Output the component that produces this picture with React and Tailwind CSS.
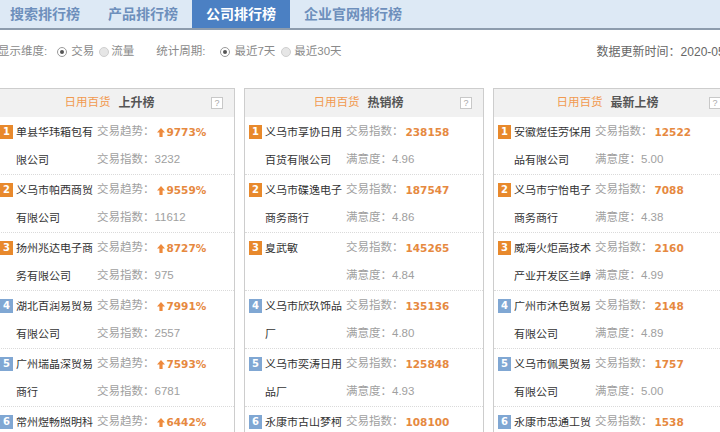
import React from 'react';

const tabs = ['搜索排行榜', '产品排行榜', '公司排行榜', '企业官网排行榜'];

const panels = [
    {
        title: '上升榜',
        label1: '交易趋势：',
        label2: '交易指数：',
        trend: true,
        rows: [
            ['单县华玮箱包有', '限公司', '9773%', '3232'],
            ['义乌市帕西商贸', '有限公司', '9559%', '11612'],
            ['扬州兆达电子商', '务有限公司', '8727%', '975'],
            ['湖北百润易贸易', '有限公司', '7991%', '2557'],
            ['广州瑞晶深贸易', '商行', '7593%', '6781'],
            ['常州煜畅照明科', '技有限公司', '6442%', '1890'],
        ],
    },
    {
        title: '热销榜',
        label1: '交易指数：',
        label2: '满意度：',
        rows: [
            ['义乌市享协日用', '百货有限公司', '238158', '4.96'],
            ['义乌市碟逸电子', '商务商行', '187547', '4.86'],
            ['夏武敏', '', '145265', '4.84'],
            ['义乌市欣玖饰品', '厂', '135136', '4.80'],
            ['义乌市奕涛日用', '品厂', '125848', '4.93'],
            ['永康市古山梦柯', '工贸有限公司', '108100', '4.90'],
        ],
    },
    {
        title: '最新上榜',
        label1: '交易指数：',
        label2: '满意度：',
        rows: [
            ['安徽煜佳劳保用', '品有限公司', '12522', '5.00'],
            ['义乌市宁怡电子', '商务商行', '7088', '4.38'],
            ['威海火炬高技术', '产业开发区兰峥', '2160', '4.99'],
            ['广州市沐色贸易', '有限公司', '2148', '4.89'],
            ['义乌市佩奥贸易', '有限公司', '1757', '5.00'],
            ['永康市忠通工贸', '有限公司', '1538', '4.95'],
        ],
    },
];

const UpArrow = () => (
    <svg width="8" height="9" viewBox="0 0 8 9" className="mr-[2px] shrink-0">
        <polygon points="4,0 8,4.5 5.6,4.5 5.6,9 2.4,9 2.4,4.5 0,4.5" fill="#ee8a3c" />
    </svg>
);

const Radio = ({ checked }) =>
    checked ? (
        <span className="block w-[10px] h-[10px] rounded-full border border-[#9a9a9a] bg-white">
            <span className="block w-[4px] h-[4px] mt-[2px] ml-[2px] rounded-full bg-[#555]" />
        </span>
    ) : (
        <span className="block w-[10px] h-[10px] rounded-full border border-[#cfcfcf] bg-[#e6e6e6]" />
    );

const Row = ({ idx, row, panel }) => {
    const [name1, name2, v1, v2] = row;
    const badge = idx < 3 ? 'bg-[#e8892c]' : 'bg-[#80a7d3]';
    return (
        <div className="pt-[1px] border-b border-dotted border-[#dadada]">
            <div className="h-[28px] flex items-center pl-[4px]">
                <span className={`w-[13px] h-[14px] ${badge} text-white text-[10px] font-bold flex items-center justify-center shrink-0 font-['DejaVu_Sans',sans-serif]`}>
                    {idx + 1}
                </span>
                <span className="w-[84px] pl-[3px] shrink-0 text-[11px] text-[#333] whitespace-nowrap overflow-hidden">{name1}</span>
                <span className="text-[#a0a0a0] whitespace-nowrap">{panel.label1}</span>
                <span className="flex items-center ml-[2px] text-[10.5px] font-bold text-[#e6893f] font-['DejaVu_Sans',sans-serif]">
                    {panel.trend && <UpArrow />}
                    {v1}
                </span>
            </div>
            <div className="h-[28px] flex items-center pl-[4px]">
                <span className="w-[13px] shrink-0" />
                <span className="w-[84px] pl-[3px] shrink-0 text-[11px] text-[#333] whitespace-nowrap overflow-hidden">{name2}</span>
                <span className="text-[#a0a0a0] whitespace-nowrap">
                    {panel.label2}
                    <span className="font-['Liberation_Sans',sans-serif]">{v2}</span>
                </span>
            </div>
        </div>
    );
};

const Panel = ({ panel }) => (
    <div className="w-[240px] shrink-0 border-t border-x border-[#cdcdcd] bg-white">
        <div className="h-[28px] bg-[#f1f1f1] flex items-center">
            <div className="flex-1" />
            <div className="flex items-center gap-[8px] whitespace-nowrap">
                <span className="text-[#f19a50] text-[11.5px]">日用百货</span>
                <span className="text-[#555] text-[12px] font-bold">{panel.title}</span>
            </div>
            <div className="flex-1 flex justify-end pr-[11px]">
                <span className="w-[12px] h-[12px] border border-[#c8c8c8] bg-white text-[9px] leading-none text-[#aaa] flex items-center justify-center font-['Liberation_Sans',sans-serif]">
                    ?
                </span>
            </div>
        </div>
        {panel.rows.map((row, i) => (
            <Row key={i} idx={i} row={row} panel={panel} />
        ))}
    </div>
);

export default function App() {
    return (
        <div className="w-[720px] h-[432px] overflow-hidden bg-white text-[11.5px] leading-none font-['Liberation_Sans','Noto_Sans_CJK_SC',sans-serif]">
            <div className="h-[30px] bg-[#dde9f5] border-b-2 border-[#8d9cad] flex items-stretch -ml-[4px]">
                {tabs.map((t, i) => (
                    <div
                        key={t}
                        className={`px-[14px] flex items-center text-[14px] font-bold whitespace-nowrap ${
                            i === 2 ? 'bg-[#4b80c3] text-white' : 'text-[#6d8fbc]'
                        }`}
                    >
                        {t}
                    </div>
                ))}
            </div>
            <div className="h-[44px] flex items-center -ml-[2px] text-[#8a8a8a] whitespace-nowrap">
                <span>显示维度:</span>
                <span className="ml-[10px]"><Radio checked /></span>
                <span className="ml-[4px]">交易</span>
                <span className="ml-[5px]"><Radio /></span>
                <span className="ml-[2px]">流量</span>
                <span className="ml-[22px]">统计周期:</span>
                <span className="ml-[15px]"><Radio checked /></span>
                <span className="ml-[4px]">最近7天</span>
                <span className="ml-[6px]"><Radio /></span>
                <span className="ml-[3px]">最近30天</span>
                <span className="ml-[255px] shrink-0 text-[#666] text-[12px]">数据更新时间：2020-05-10</span>
            </div>
            <div className="mt-[14px] -ml-[5px] flex gap-[9px]">
                {panels.map((p) => (
                    <Panel key={p.title} panel={p} />
                ))}
            </div>
        </div>
    );
}
